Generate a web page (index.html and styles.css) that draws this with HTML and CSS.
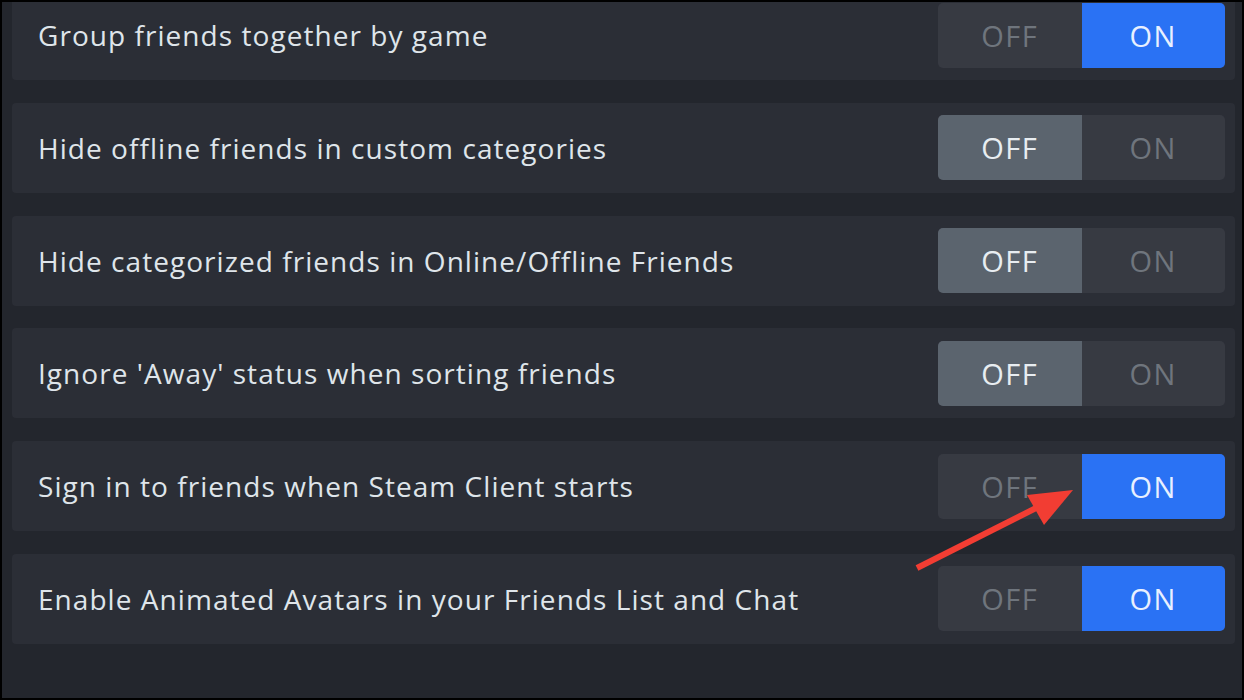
FILE: index.html
```html
<!DOCTYPE html>
<html>
<head>
<meta charset="utf-8">
<link rel="stylesheet" href="styles.css">
</head>
<body>
<div class="frame">
  <div class="list">
    <div class="row">
      <span class="label">Group friends together by game</span>
      <div class="toggle"><span class="opt">OFF</span><span class="opt on">ON</span></div>
    </div>
    <div class="row">
      <span class="label">Hide offline friends in custom categories</span>
      <div class="toggle"><span class="opt off">OFF</span><span class="opt">ON</span></div>
    </div>
    <div class="row">
      <span class="label">Hide categorized friends in Online/Offline Friends</span>
      <div class="toggle"><span class="opt off">OFF</span><span class="opt">ON</span></div>
    </div>
    <div class="row">
      <span class="label">Ignore 'Away' status when sorting friends</span>
      <div class="toggle"><span class="opt off">OFF</span><span class="opt">ON</span></div>
    </div>
    <div class="row">
      <span class="label">Sign in to friends when Steam Client starts</span>
      <div class="toggle"><span class="opt">OFF</span><span class="opt on">ON</span></div>
    </div>
    <div class="row">
      <span class="label">Enable Animated Avatars in your Friends List and Chat</span>
      <div class="toggle"><span class="opt">OFF</span><span class="opt on">ON</span></div>
    </div>
  </div>
  <svg class="arrow" width="1244" height="700" viewBox="0 0 1244 700">
    <line x1="917" y1="568" x2="1040" y2="506" stroke="#f23d33" stroke-width="6" stroke-linecap="butt"/>
    <polygon points="1073,490 1027,495 1044,525" fill="#f23d33"/>
  </svg>
</div>
</body>
</html>
```
FILE: styles.css
```css
html, body {
  margin: 0;
  padding: 0;
  background: #000;
}
.frame {
  position: relative;
  width: 1240px;
  height: 696px;
  margin: 2px;
  background: #23262d;
  overflow: hidden;
  font-family: "Open Sans", "Noto Sans", sans-serif;
}
.list {
  display: flex;
  flex-direction: column;
  gap: 22.8px;
  margin-top: -12px;
  padding: 0 7px 0 10px;
}
.row {
  height: 90px;
  display: flex;
  align-items: center;
  justify-content: space-between;
  background: #2b2e36;
  border-radius: 4px;
  padding: 0 10px 0 26px;
}
.label {
  color: #dfe5ea;
  font-size: 28px;
  letter-spacing: 1.05px;
}
.toggle {
  display: flex;
  width: 287px;
  height: 65px;
  border-radius: 5px;
  background: #373a42;
  overflow: hidden;
}
.opt {
  flex: 1;
  display: flex;
  align-items: center;
  justify-content: center;
  color: #6f757d;
  font-size: 29px;
  letter-spacing: 1.5px;
}
.opt.off {
  background: #5b646e;
  color: #e8edf1;
}
.opt.on {
  background: #2a72f4;
  color: #e8f0ff;
}
.arrow {
  position: absolute;
  left: -2px;
  top: -2px;
  pointer-events: none;
}
```
